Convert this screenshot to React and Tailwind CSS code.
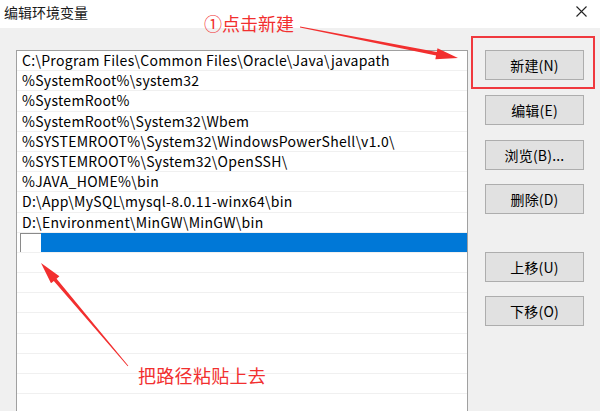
import React from "react";

const paths = [
  "C:\\Program Files\\Common Files\\Oracle\\Java\\javapath",
  "%SystemRoot%\\system32",
  "%SystemRoot%",
  "%SystemRoot%\\System32\\Wbem",
  "%SYSTEMROOT%\\System32\\WindowsPowerShell\\v1.0\\",
  "%SYSTEMROOT%\\System32\\OpenSSH\\",
  "%JAVA_HOME%\\bin",
  "D:\\App\\MySQL\\mysql-8.0.11-winx64\\bin",
  "D:\\Environment\\MinGW\\MinGW\\bin",
];

const font = { fontFamily: '"Segoe UI", "Noto Sans CJK SC", "Noto Sans", sans-serif' };

function WinButton({ children, className = "" }) {
  return (
    <button
      className={`h-[30px] w-[99px] bg-[#e1e1e1] border border-[#adadad] text-[14px] tracking-[0.2px] text-black flex items-center justify-center ${className}`}
    >
      {children}
    </button>
  );
}

// 红色箭头，尾细头粗
function Arrow({ x1, y1, x2, y2 }) {
  const dx = x2 - x1;
  const dy = y2 - y1;
  const len = Math.sqrt(dx * dx + dy * dy);
  const ux = dx / len;
  const uy = dy / len;
  const px = -uy;
  const py = ux;
  const head = 22;
  const bx = x2 - ux * head;
  const by = y2 - uy * head;
  const pts = [
    [x1 + px * 0.4, y1 + py * 0.4],
    [bx + px * 1.8, by + py * 1.8],
    [bx + px * 5.5, by + py * 5.5],
    [x2, y2],
    [bx - px * 5.5, by - py * 5.5],
    [bx - px * 1.8, by - py * 1.8],
    [x1 - px * 0.4, y1 - py * 0.4],
  ];
  return <polygon points={pts.map((p) => p.join(",")).join(" ")} fill="#f22f2f" />;
}

export default function App() {
  const emptyRows = Array.from({ length: 9 });

  return (
    <div className="relative w-[600px] h-[411px] overflow-hidden bg-[#f0f0f0]" style={font}>
      {/* 标题栏 */}
      <div className="h-[28px] bg-white flex items-start justify-between pl-[4px] pr-[13px]">
        <span className="mt-[4px] text-[14px] leading-[16px] text-[#1a1a1a]">编辑环境变量</span>
        <svg className="mt-[6px]" width="11" height="11" viewBox="0 0 11 11">
          <path d="M0.5 0.5 L10.5 10.5 M10.5 0.5 L0.5 10.5" stroke="#222" strokeWidth="1.1" />
        </svg>
      </div>

      <div className="flex pl-[16px] pt-[22px]">
        {/* 路径列表 */}
        <div className="w-[452px] h-[361px] bg-white border-l border-t border-r border-[#a0a0a0] overflow-hidden">
          {paths.map((p) => (
            <div
              key={p}
              className="h-[20.2px] border-b border-[#f0f0f0] pl-[5px] text-[14px] tracking-[0.3px] leading-[19px] text-black whitespace-nowrap"
            >
              {p}
            </div>
          ))}
          <div className="h-[20.2px] flex pl-[3px] border-b border-[#f0f0f0]">
            <div className="w-[21px] h-full bg-white border-l border-t border-[#8a8a8a]" />
            <div className="flex-1 h-full bg-[#0078d7]" />
          </div>
          {emptyRows.map((_, i) => (
            <div key={i} className="h-[20.2px] border-b border-[#f0f0f0]" />
          ))}
        </div>

        {/* 按钮 */}
        <div className="ml-[17px] flex flex-col">
          <WinButton>新建(N)</WinButton>
          <WinButton className="mt-[15px]">编辑(E)</WinButton>
          <WinButton className="mt-[15px]">浏览(B)...</WinButton>
          <WinButton className="mt-[14px]">删除(D)</WinButton>
          <WinButton className="mt-[38px]">上移(U)</WinButton>
          <WinButton className="mt-[14px]">下移(O)</WinButton>
        </div>
      </div>

      {/* 标注 */}
      <div className="absolute left-[471px] top-[36px] w-[124px] h-[53px] border-2 border-[#f0393e]" />
      <div className="absolute left-[204px] top-[12px] text-[18px] leading-[22px] text-[#f22f2f]">①点击新建</div>
      <div className="absolute left-[138px] top-[364px] text-[18px] tracking-[0.3px] leading-[22px] text-[#f22f2f]">把路径粘贴上去</div>
      <svg className="absolute left-0 top-0 pointer-events-none" width="600" height="411">
        <Arrow x1={300} y1={27} x2={458} y2={58} />
        <Arrow x1={128} y1={366} x2={41} y2={263} />
      </svg>
    </div>
  );
}
